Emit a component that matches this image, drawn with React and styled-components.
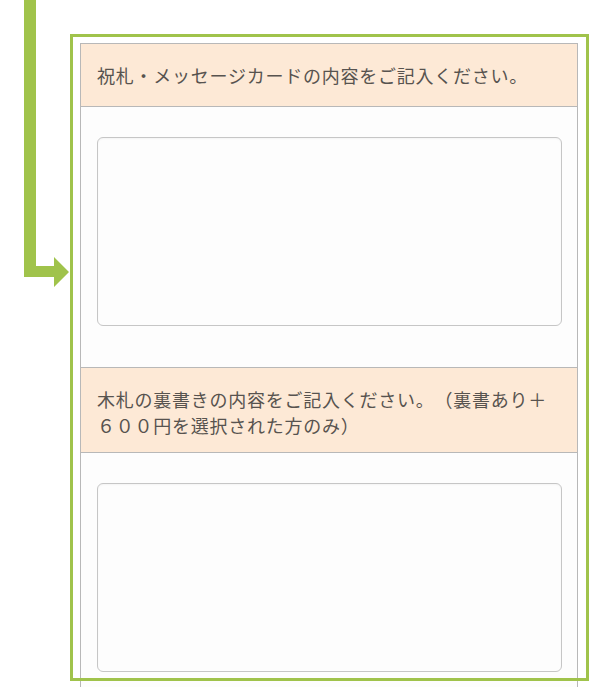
import React from "react";
import styled, { createGlobalStyle } from "styled-components";

const GlobalStyle = createGlobalStyle`
  html, body {
    margin: 0;
    padding: 0;
    background: #ffffff;
  }
  body {
    font-family: "Noto Sans CJK JP", "Noto Sans", sans-serif;
    color: #595959;
    overflow: hidden;
  }
`;

const Page = styled.div`
  position: relative;
  padding: 43px 0 0 80px;
  width: 498px;
`;

const Table = styled.div`
  border: 1px solid #b8b8b8;
  border-bottom: none;
  display: flex;
  flex-direction: column;
`;

const Head = styled.div`
  box-sizing: border-box;
  min-height: 63px;
  padding: 18px 16px 14px 16px;
  background: #fde9d6;
  border-top: ${(p) => (p.first ? "none" : "1px solid #b8b8b8")};
  border-bottom: 1px solid #b8b8b8;
  font-size: 18px;
  line-height: 26px;
  letter-spacing: 0.75px;
  text-spacing-trim: space-all;
  font-feature-settings: "fwid" 1;
  color: #57534f;
`;

const Body = styled.div`
  padding: 30px 15px ${(p) => p.bottom}px 16px;
  background: #fdfdfd;
`;

const Field = styled.textarea`
  display: block;
  box-sizing: border-box;
  width: 100%;
  height: 189px;
  margin: 0;
  border: 1px solid #c6c6c6;
  border-radius: 6px;
  background: #fdfdfd;
  box-shadow: inset 0 1px 2px rgba(0, 0, 0, 0.04);
  resize: none;
  font: inherit;
  outline: none;
`;

const Highlight = styled.div`
  position: absolute;
  left: 70px;
  top: 34px;
  width: 519px;
  height: 647px;
  box-sizing: border-box;
  border: 3px solid #a0c34b;
  pointer-events: none;
`;

const Arrow = styled.svg`
  position: absolute;
  left: 24px;
  top: 0;
`;

export default function App() {
  return (
    <>
      <GlobalStyle />
      <Page>
        <Table>
          <Head first>祝札・メッセージカードの内容をご記入ください。</Head>
          <Body bottom={41}>
            <Field />
          </Body>
          <Head>
            木札の裏書きの内容をご記入ください。（裏書あり＋６００円を選択された方のみ）
          </Head>
          <Body bottom={30}>
            <Field />
          </Body>
        </Table>
        <Highlight />
        <Arrow width="46" height="288" viewBox="0 0 46 288">
          <path
            d="M0 0 H12 V266 H30 V257 L45 272 L30 287 V277 H0 Z"
            fill="#a0c34b"
          />
        </Arrow>
      </Page>
    </>
  );
}
